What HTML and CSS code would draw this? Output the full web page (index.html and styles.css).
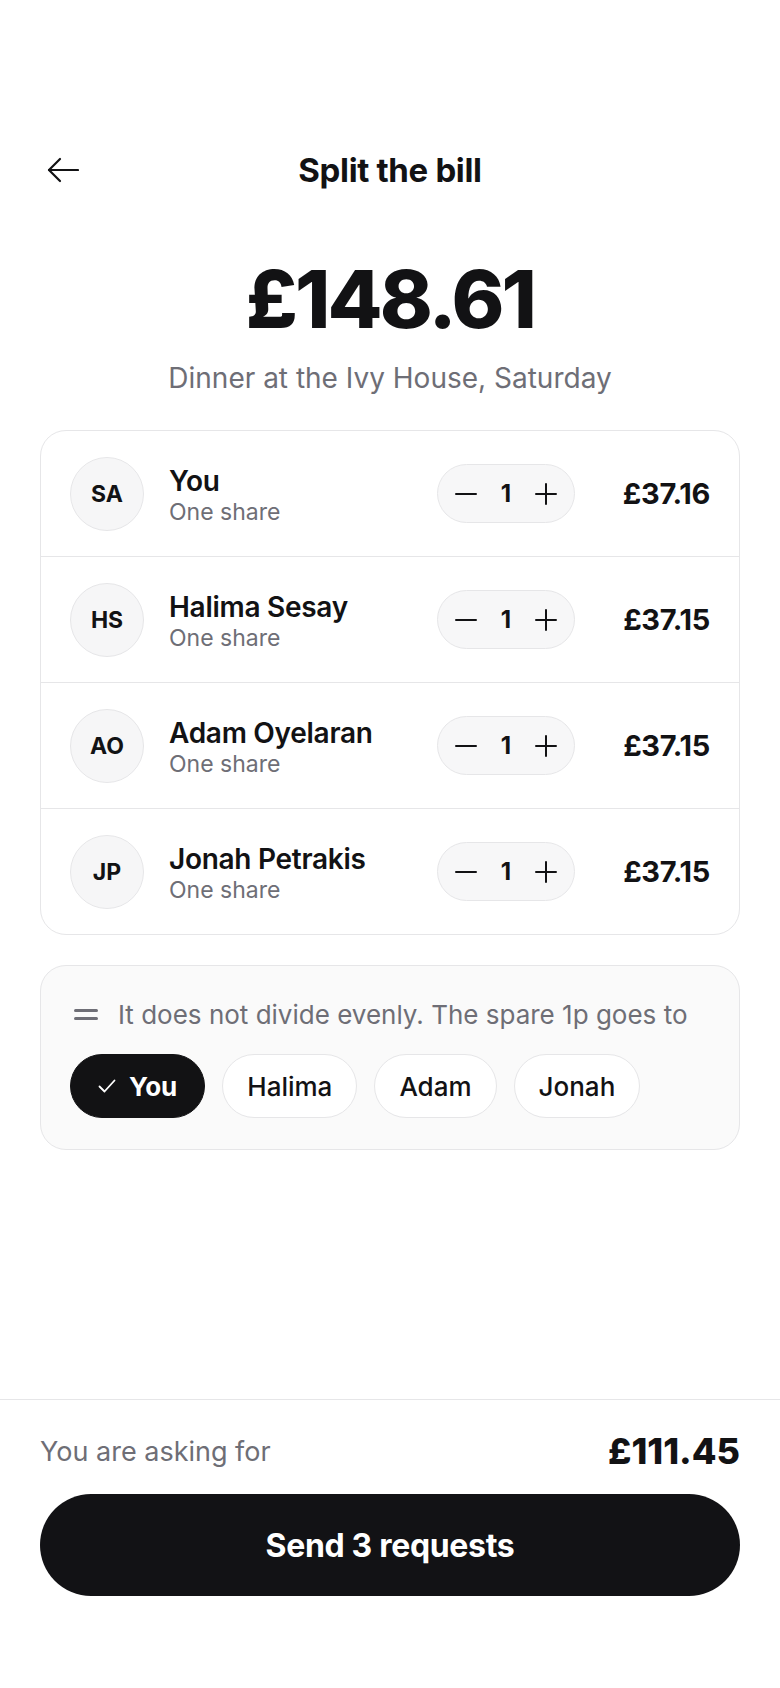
FILE: index.html
```html
<!DOCTYPE html>
<html>
<head>
    <title>Split the bill</title>
    <link rel="stylesheet" href="styles.css">
</head>
<body>
    <main class="page">
        <header class="top-bar">
            <button class="back-btn" aria-label="Back">
                <svg width="32" height="26" viewBox="0 0 32 26" fill="none" stroke="currentColor" stroke-width="2.2" stroke-linecap="round" stroke-linejoin="round">
                    <path d="M31 13H2"/>
                    <path d="M13 2L2 13l11 11"/>
                </svg>
            </button>
            <h1>Split the bill</h1>
        </header>

        <section class="summary">
            <div class="total">£148.61</div>
            <p class="desc">Dinner at the Ivy House, Saturday</p>
        </section>

        <ul class="people">
            <li class="person">
                <div class="avatar">SA</div>
                <div class="who">
                    <div class="name">You</div>
                    <div class="share">One share</div>
                </div>
                <div class="stepper">
                    <button class="step" aria-label="Less">
                        <svg width="22" height="22" viewBox="0 0 22 22" stroke="currentColor" stroke-width="2" stroke-linecap="round"><path d="M1 11h20"/></svg>
                    </button>
                    <span class="count">1</span>
                    <button class="step" aria-label="More">
                        <svg width="22" height="22" viewBox="0 0 22 22" stroke="currentColor" stroke-width="2" stroke-linecap="round"><path d="M1 11h20M11 1v20"/></svg>
                    </button>
                </div>
                <div class="amount">£37.16</div>
            </li>
            <li class="person">
                <div class="avatar">HS</div>
                <div class="who">
                    <div class="name">Halima Sesay</div>
                    <div class="share">One share</div>
                </div>
                <div class="stepper">
                    <button class="step" aria-label="Less">
                        <svg width="22" height="22" viewBox="0 0 22 22" stroke="currentColor" stroke-width="2" stroke-linecap="round"><path d="M1 11h20"/></svg>
                    </button>
                    <span class="count">1</span>
                    <button class="step" aria-label="More">
                        <svg width="22" height="22" viewBox="0 0 22 22" stroke="currentColor" stroke-width="2" stroke-linecap="round"><path d="M1 11h20M11 1v20"/></svg>
                    </button>
                </div>
                <div class="amount">£37.15</div>
            </li>
            <li class="person">
                <div class="avatar">AO</div>
                <div class="who">
                    <div class="name">Adam Oyelaran</div>
                    <div class="share">One share</div>
                </div>
                <div class="stepper">
                    <button class="step" aria-label="Less">
                        <svg width="22" height="22" viewBox="0 0 22 22" stroke="currentColor" stroke-width="2" stroke-linecap="round"><path d="M1 11h20"/></svg>
                    </button>
                    <span class="count">1</span>
                    <button class="step" aria-label="More">
                        <svg width="22" height="22" viewBox="0 0 22 22" stroke="currentColor" stroke-width="2" stroke-linecap="round"><path d="M1 11h20M11 1v20"/></svg>
                    </button>
                </div>
                <div class="amount">£37.15</div>
            </li>
            <li class="person">
                <div class="avatar">JP</div>
                <div class="who">
                    <div class="name">Jonah Petrakis</div>
                    <div class="share">One share</div>
                </div>
                <div class="stepper">
                    <button class="step" aria-label="Less">
                        <svg width="22" height="22" viewBox="0 0 22 22" stroke="currentColor" stroke-width="2" stroke-linecap="round"><path d="M1 11h20"/></svg>
                    </button>
                    <span class="count">1</span>
                    <button class="step" aria-label="More">
                        <svg width="22" height="22" viewBox="0 0 22 22" stroke="currentColor" stroke-width="2" stroke-linecap="round"><path d="M1 11h20M11 1v20"/></svg>
                    </button>
                </div>
                <div class="amount">£37.15</div>
            </li>
        </ul>

        <section class="remainder">
            <p class="remainder-text">
                <svg class="equals" width="24" height="12" viewBox="0 0 24 12" fill="currentColor"><rect x="0" y="0" width="24" height="3" rx="1.5"/><rect x="0" y="8" width="24" height="3" rx="1.5"/></svg>
                It does not divide evenly. The spare 1p goes to
            </p>
            <div class="chips">
                <button class="chip selected">
                    <svg width="18" height="14" viewBox="0 0 18 14" fill="none" stroke="currentColor" stroke-width="1.8" stroke-linecap="round" stroke-linejoin="round"><path d="M1.5 7.5l5 5L16.5 1.5"/></svg>
                    You
                </button>
                <button class="chip">Halima</button>
                <button class="chip">Adam</button>
                <button class="chip">Jonah</button>
            </div>
        </section>
    </main>

    <footer class="footer">
        <div class="asking">
            <span class="asking-label">You are asking for</span>
            <span class="asking-total">£111.45</span>
        </div>
        <button class="send-btn">Send 3 requests</button>
    </footer>
</body>
</html>
```

FILE: styles.css
```css
* {
    box-sizing: border-box;
}

body {
    margin: 0;
    min-height: 100vh;
    display: flex;
    flex-direction: column;
    font-family: Inter, 'Noto Sans', sans-serif;
    background: #ffffff;
    color: #121214;
}

button {
    font-family: inherit;
    color: inherit;
    background: none;
    border: none;
    padding: 0;
    cursor: pointer;
}

.page {
    flex: 1;
    padding: 142px 40px 0;
}

/* Header */
.top-bar {
    position: relative;
    height: 56px;
    display: flex;
    align-items: center;
    justify-content: center;
}

.back-btn {
    position: absolute;
    left: 7px;
    top: 15px;
    display: flex;
    color: #121214;
}

.top-bar h1 {
    margin: 0;
    font-size: 33px;
    font-weight: 700;
    letter-spacing: -0.01em;
}

/* Total */
.summary {
    text-align: center;
    margin-top: 61px;
}

.total {
    font-size: 80px;
    line-height: 1;
    font-weight: 800;
    letter-spacing: -0.035em;
}

.desc {
    margin: 22px 0 0;
    font-size: 28px;
    line-height: 34px;
    color: #6e6e76;
}

/* People list */
.people {
    list-style: none;
    margin: 35px 0 0;
    padding: 0;
    border: 1px solid #e6e6e8;
    border-radius: 26px;
    overflow: hidden;
}

.person {
    height: 126px;
    display: flex;
    align-items: center;
    padding: 0 29px;
    border-bottom: 1px solid #e6e6e8;
}

.person:last-child {
    border-bottom: none;
    height: 125px;
}

.avatar {
    width: 74px;
    height: 74px;
    flex: none;
    border-radius: 50%;
    background: #f6f6f7;
    border: 1px solid #e6e6e8;
    display: flex;
    align-items: center;
    justify-content: center;
    font-size: 23px;
    font-weight: 700;
}

.who {
    flex: 1;
    margin: 4px 0 0 25px;
    min-width: 0;
}

.name {
    font-size: 28px;
    line-height: 32px;
    font-weight: 600;
    letter-spacing: -0.01em;
}

.share {
    font-size: 23px;
    line-height: 30px;
    color: #6e6e76;
}

.stepper {
    width: 138px;
    height: 59px;
    flex: none;
    display: flex;
    align-items: center;
    justify-content: space-between;
    padding: 0 17px;
    background: #f7f7f8;
    border: 1px solid #e6e6e8;
    border-radius: 30px;
}

.step {
    display: flex;
    color: #121214;
}

.count {
    font-size: 24px;
    font-weight: 700;
}

.amount {
    width: 135px;
    flex: none;
    text-align: right;
    font-size: 29px;
    font-weight: 700;
    letter-spacing: -0.01em;
}

/* Spare penny box */
.remainder {
    margin-top: 30px;
    padding: 32px 29px 31px;
    background: #fafafa;
    border: 1px solid #e6e6e8;
    border-radius: 26px;
}

.remainder-text {
    margin: 0;
    display: flex;
    align-items: center;
    font-size: 26px;
    line-height: 34px;
    color: #6e6e76;
    white-space: nowrap;
}

.equals {
    margin: 0 20px 0 4px;
    color: #6e6e76;
}

.chips {
    display: flex;
    gap: 17px;
    margin-top: 22px;
}

.chip {
    height: 64px;
    padding: 0 24px;
    display: flex;
    align-items: center;
    gap: 13px;
    font-size: 26px;
    font-weight: 500;
    background: #ffffff;
    border: 1px solid #e6e6e8;
    border-radius: 32px;
}

.chip.selected {
    padding: 0 27px;
    background: #121214;
    border-color: #121214;
    color: #ffffff;
    font-weight: 700;
}

/* Footer */
.footer {
    border-top: 1px solid #e6e6e8;
    padding: 31px 40px 92px;
}

.asking {
    display: flex;
    justify-content: space-between;
    align-items: center;
    height: 40px;
}

.asking-label {
    font-size: 27px;
    color: #6e6e76;
}

.asking-total {
    font-size: 36px;
    font-weight: 800;
}

.send-btn {
    display: block;
    width: 100%;
    height: 102px;
    margin-top: 23px;
    background: #121215;
    color: #ffffff;
    border-radius: 51px;
    font-size: 32px;
    font-weight: 700;
    letter-spacing: -0.01em;
}
```
